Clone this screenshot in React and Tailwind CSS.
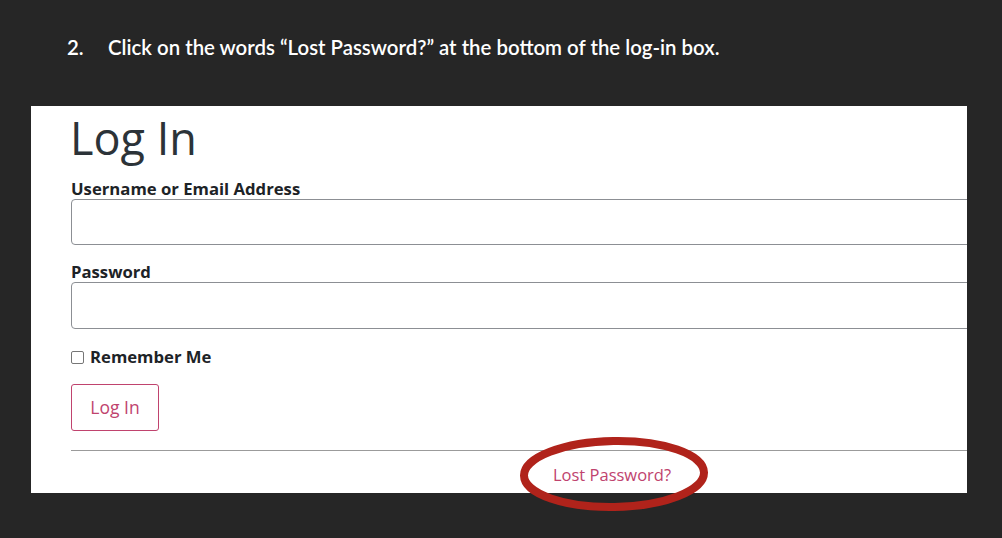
import React from "react";

const App = () => {
  return (
    <div className="relative w-[1002px] h-[538px] bg-[#262626] overflow-hidden font-['Open_Sans',sans-serif]">
      {/* instruction line */}
      <div className="flex items-center pt-[33px] pl-[67px] text-white text-[20.4px] leading-[28px] font-['Lato',sans-serif] font-semibold">
        <span className="w-[41px]">2.</span>
        <span>Click on the words “Lost Password?” at the bottom of the log-in box.</span>
      </div>

      {/* screenshot of the login box */}
      <div className="mt-[45px] ml-[31px] w-[936px] h-[387px] bg-white overflow-hidden pl-[40px]">
        <h1 className="text-[#2c3338] text-[45px] leading-[58px] pt-[3px] -ml-[1px]">Log In</h1>

        <label className="block mt-[11px] text-[16.7px] leading-[21px] font-bold text-[#1d2327]">Username or Email Address</label>
        <div className="w-[1000px] h-[46px] border border-[#8c8f94] rounded-[4px]"></div>

        <label className="block mt-[16px] text-[16.7px] leading-[21px] font-bold text-[#1d2327]">Password</label>
        <div className="w-[1000px] h-[47px] border border-[#8c8f94] rounded-[4px]"></div>

        <div className="flex items-center gap-[6px] mt-[18px] h-[20px]">
          <span className="w-[13px] h-[13px] border border-[#767676] rounded-[2px]"></span>
          <span className="text-[16.7px] font-bold text-[#1d2327]">Remember Me</span>
        </div>

        <div className="mt-[17px] w-[88px] h-[47px] border border-[#c0436e] rounded-[3px] flex items-center justify-center text-[17.5px] text-[#c0436e]">
          Log In
        </div>

        <div className="mt-[19px] h-px bg-[#9b9b9b] w-[900px]"></div>

        <div className="flex justify-center w-[1000px] pl-[82px] pt-[12px]">
          <span className="text-[16.5px] text-[#c0436e]">Lost Password?</span>
        </div>
      </div>

      {/* red ring annotation */}
      <svg className="absolute left-[514px] top-[432px]" width="200" height="84" viewBox="0 0 200 84">
        <ellipse cx="100" cy="42" rx="90" ry="33" fill="none" stroke="#b0231b" strokeWidth="8" transform="rotate(-1 100 42)" />
      </svg>
    </div>
  );
};

export default App;
